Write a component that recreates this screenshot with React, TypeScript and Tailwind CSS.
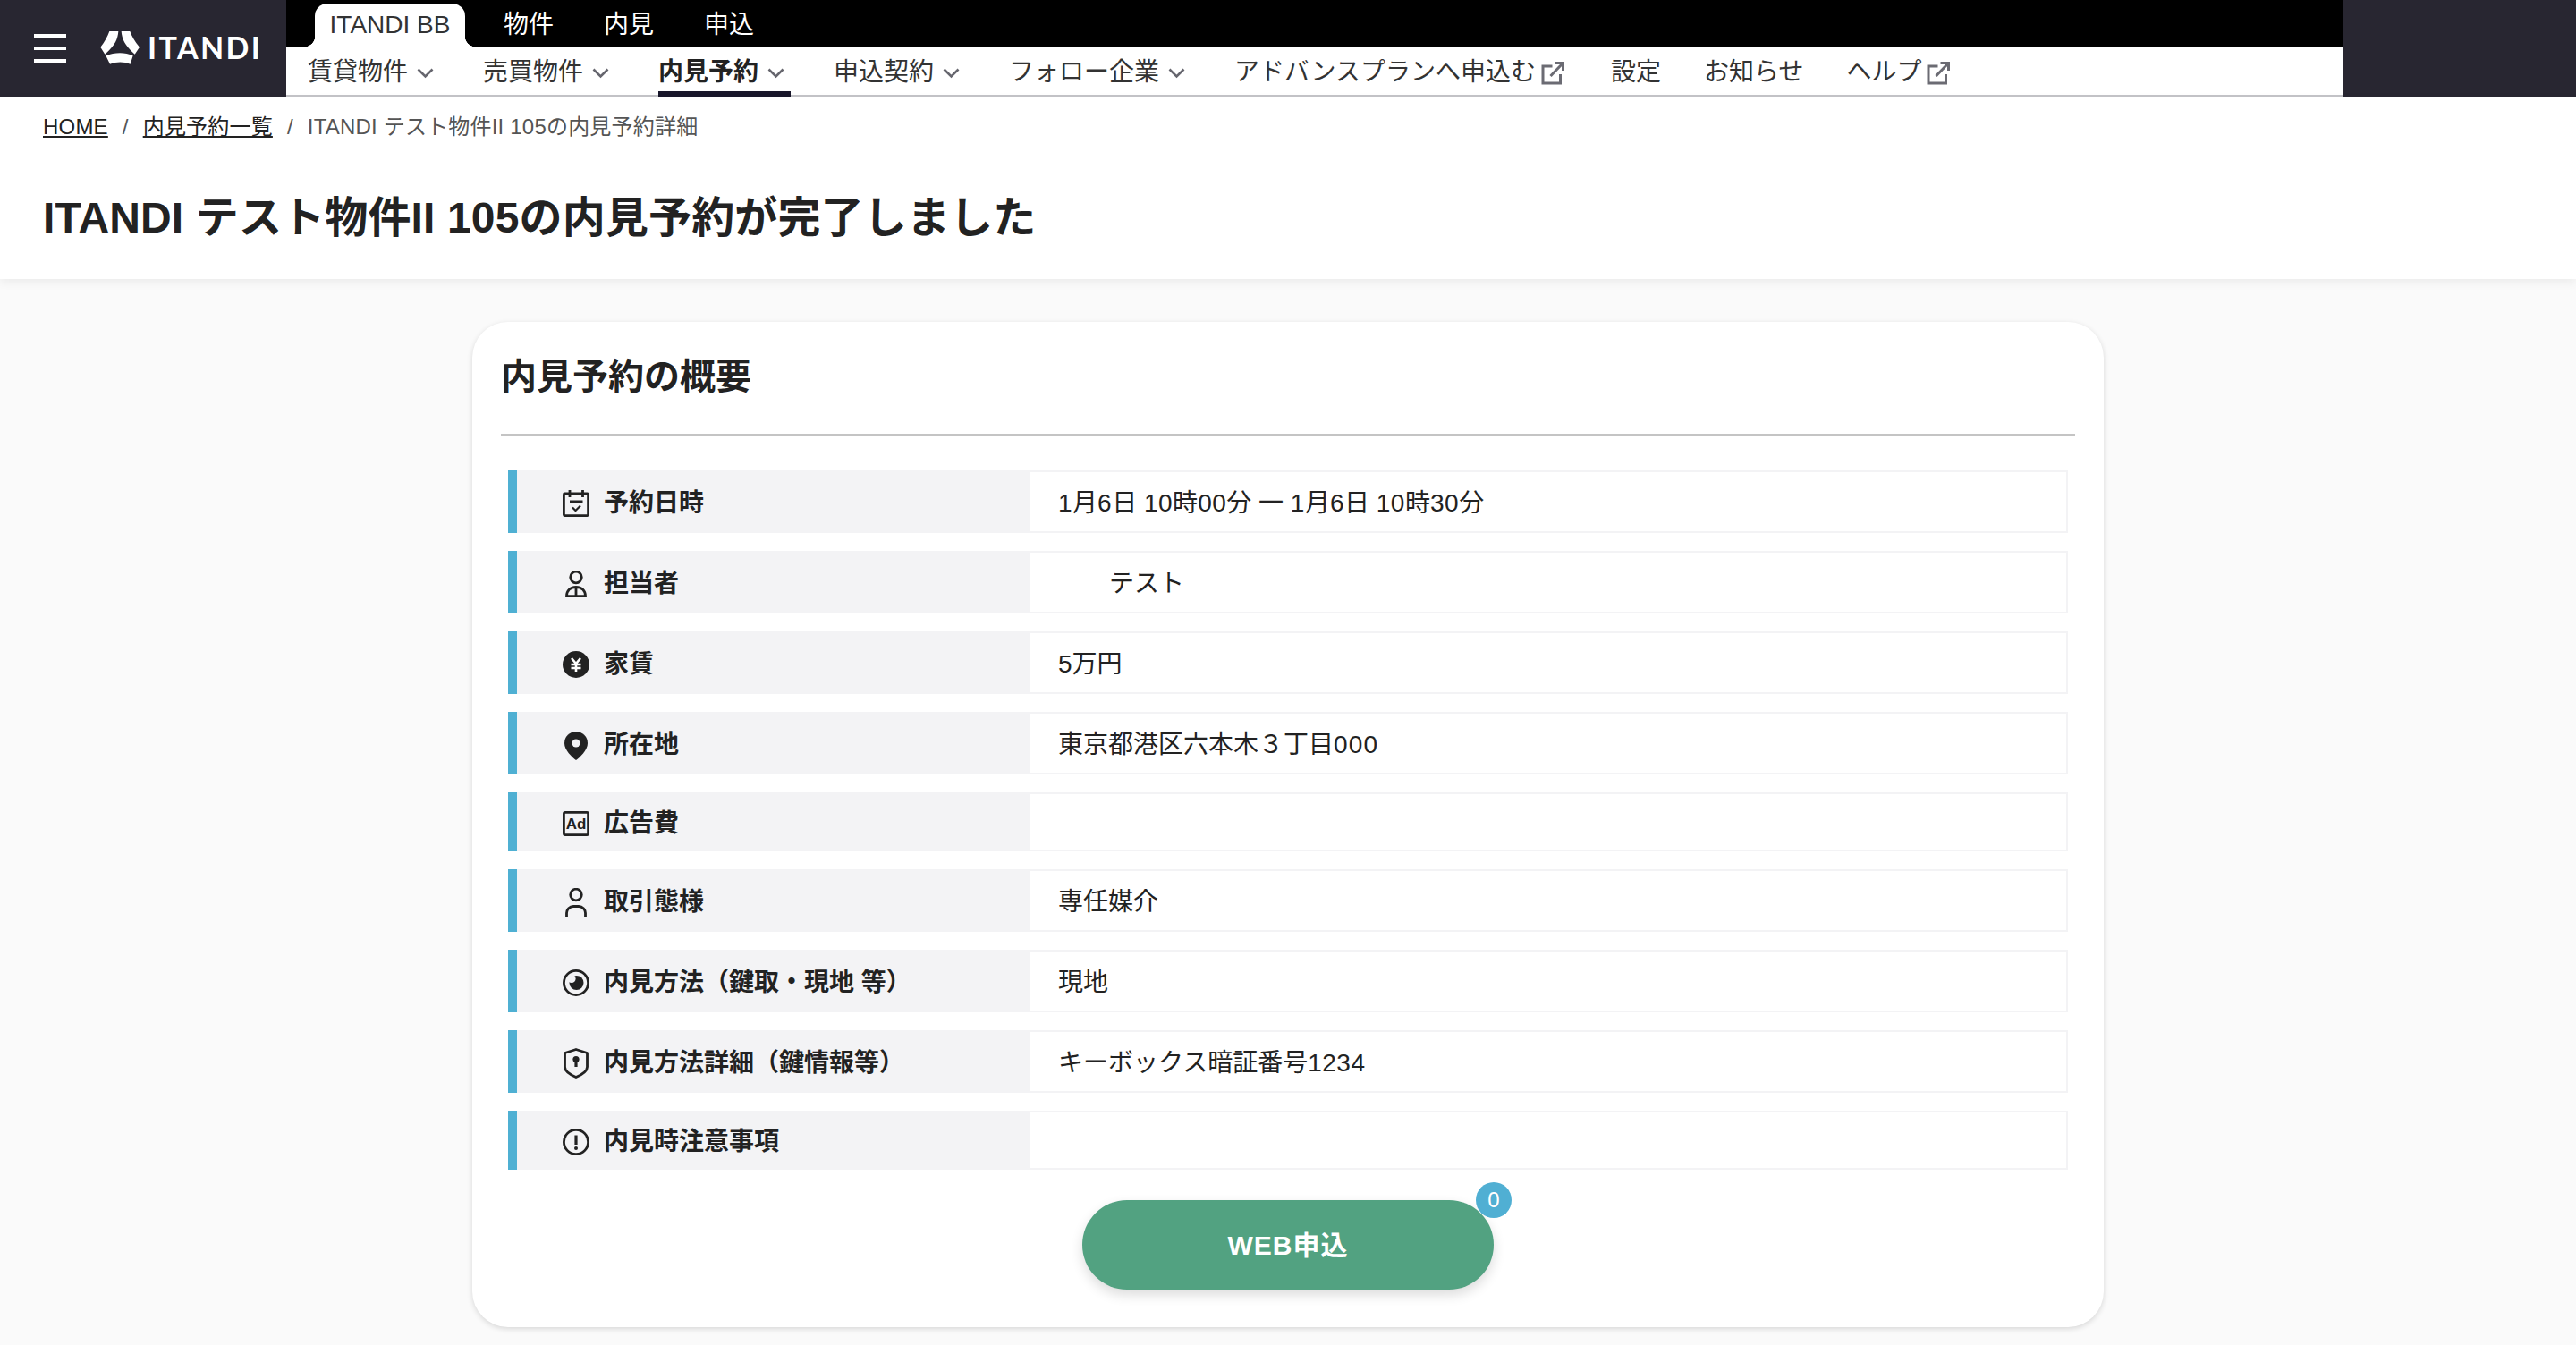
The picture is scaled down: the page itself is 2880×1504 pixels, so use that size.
import type { ReactNode } from "react";

const FONT = "font-['Liberation_Sans','Noto_Sans_CJK_JP',sans-serif]";

const Chevron = () => (
  <svg className="h-9 w-9 shrink-0" viewBox="0 0 36 36" fill="none">
    <path d="M11.5 14.5 L19.5 22.5 L27.5 14.5" stroke="#66666e" strokeWidth="2.6" />
  </svg>
);

const External = () => (
  <svg className="h-9 w-9 shrink-0" viewBox="0 0 36 36" fill="none" stroke="#6b6b73" strokeWidth="3">
    <path d="M18.5 11 H8 V30 H27.5 V20" />
    <path d="M16.5 22 L29.5 8.5" />
    <path d="M21.5 7.5 H30.5 V16" />
  </svg>
);

const CalendarIcon = () => (
  <svg className="h-[30px] w-[30px]" viewBox="0 0 30 30" fill="none" stroke="#222" strokeWidth="2.8">
    <rect x="1.4" y="4" width="27.2" height="24.6" rx="1" />
    <path d="M8 0 V8 M22.5 0 V8 M8 13 H22.5" />
    <path d="M11 19.5 L14.5 23 L20 17.5" strokeWidth="2.2" />
  </svg>
);

const StaffIcon = () => (
  <svg className="h-[30px] w-[30px]" viewBox="0 0 30 30" fill="none" stroke="#222" strokeWidth="2.8">
    <circle cx="15" cy="7.5" r="6.3" />
    <path d="M4.5 28.6 C4.5 22 9 18.5 15 18.5 C21 18.5 25.5 22 25.5 28.6 Z M15 18.5 V29" />
  </svg>
);

const YenIcon = () => (
  <svg className="h-[30px] w-[30px]" viewBox="0 0 30 30" fill="none">
    <circle cx="15" cy="15" r="15" fill="#222" />
    <path d="M10 8 L15 14 L20 8 M15 14 V23 M9.5 15 H20.5 M9.5 19 H20.5" stroke="#fff" strokeWidth="2.6" />
  </svg>
);

const PinIcon = () => (
  <svg className="mt-[2px] h-[32px] w-[30px]" viewBox="0 0 30 32" fill="none">
    <path d="M15 0 A13 13 0 0 1 28 13 C28 21 19 29 15 32 C11 29 2 21 2 13 A13 13 0 0 1 15 0 Z" fill="#222" />
    <circle cx="15" cy="13" r="4.5" fill="#f3f3f5" />
  </svg>
);

const AdIcon = () => (
  <svg className="h-[28px] w-[30px]" viewBox="0 0 30 28" fill="none">
    <rect x="1.4" y="1.4" width="27.2" height="25.2" rx="1.5" stroke="#222" strokeWidth="2.8" />
    <text x="15" y="20" textAnchor="middle" fontSize="17" fontWeight="700" fill="#222" fontFamily="Liberation Sans">
      Ad
    </text>
  </svg>
);

const PersonIcon = () => (
  <svg className="h-[32px] w-[30px]" viewBox="0 0 30 32" fill="none" stroke="#222" strokeWidth="2.8">
    <circle cx="15" cy="7.5" r="6.3" />
    <path d="M4.5 32 V28 A7.5 7.5 0 0 1 12 20.5 H18 A7.5 7.5 0 0 1 25.5 28 V32" />
  </svg>
);

const EyeIcon = () => (
  <svg className="h-[30px] w-[30px]" viewBox="0 0 30 30" fill="none">
    <circle cx="15" cy="15" r="13.6" stroke="#222" strokeWidth="2.8" />
    <circle cx="15.5" cy="15" r="8" fill="#222" />
    <circle cx="10" cy="10.5" r="4.6" fill="#f3f3f5" />
  </svg>
);

const ShieldIcon = () => (
  <svg className="h-[34px] w-[30px]" viewBox="0 0 30 34" fill="none">
    <path
      d="M15 1.5 L27.5 5.5 V21 C27.5 26 21 30 15 32.5 C9 30 2.5 26 2.5 21 V5.5 Z"
      stroke="#222"
      strokeWidth="2.8"
      strokeLinejoin="round"
    />
    <circle cx="15" cy="12.5" r="3.6" fill="#222" />
    <path d="M15 13 V21" stroke="#222" strokeWidth="3.2" />
  </svg>
);

const AlertIcon = () => (
  <svg className="h-[30px] w-[30px]" viewBox="0 0 30 30" fill="none">
    <circle cx="15" cy="15" r="13.6" stroke="#222" strokeWidth="2.8" />
    <path d="M15 7.5 V18" stroke="#222" strokeWidth="3.2" />
    <circle cx="15" cy="22" r="2" fill="#222" />
  </svg>
);

const LogoMark = () => (
  <svg className="h-[48px] w-[60px] shrink-0" viewBox="0 0 180 144" fill="#fff">
    <path d="M52 15 H82 C80 40 72 62 37 92 L22 68 C36 50 46 32 52 15 Z" />
    <path d="M92 15 H121 C127 32 138 50 153 68 L137 92 C103 62 94 40 92 15 Z" />
    <path d="M40 97 C70 85 105 85 131 97 L122 125 C100 116 76 116 54 125 Z" />
  </svg>
);

const nav: { label: string; icon?: "chevron" | "external"; active?: boolean }[] = [
  { label: "賃貸物件", icon: "chevron" },
  { label: "売買物件", icon: "chevron" },
  { label: "内見予約", icon: "chevron", active: true },
  { label: "申込契約", icon: "chevron" },
  { label: "フォロー企業", icon: "chevron" },
  { label: "アドバンスプランへ申込む", icon: "external" },
  { label: "設定" },
  { label: "お知らせ" },
  { label: "ヘルプ", icon: "external" },
];

const Header = () => (
  <header className="flex h-[108px] shrink-0">
    <div className="flex w-[320px] shrink-0 items-center bg-[#282631] pl-[38px]">
      <div className="flex w-[36px] flex-col gap-[10px]">
        <span className="h-[4px] bg-white" />
        <span className="h-[4px] bg-white" />
        <span className="h-[4px] bg-white" />
      </div>
      <div className="ml-[31px] flex items-center">
        <LogoMark />
        <span className="mb-[3px] ml-[0px] font-['Lato',sans-serif] text-[34px] leading-none font-bold tracking-[2.4px] text-white">
          ITANDI
        </span>
      </div>
    </div>
    <div className="flex min-w-0 flex-1 flex-col border-b-2 border-[#c4c4c8]">
      <div className="flex h-[52px] shrink-0 items-end bg-black pl-[32px] text-[28px]">
        <div className="relative flex h-[48px] w-[168px] items-center justify-center rounded-t-[14px] bg-white text-[#333]">
          ITANDI BB
          <span className="absolute bottom-0 left-[-12px] h-[12px] w-[12px] bg-[radial-gradient(circle_at_0_0,#000_12px,#fff_12.5px)]" />
          <span className="absolute right-[-12px] bottom-0 h-[12px] w-[12px] bg-[radial-gradient(circle_at_100%_0,#000_12px,#fff_12.5px)]" />
        </div>
        <div className="ml-[15px] flex h-[48px] items-center text-white">
          <span className="px-[28px]">物件</span>
          <span className="px-[28px]">内見</span>
          <span className="px-[28px]">申込</span>
        </div>
      </div>
      <nav className="flex h-[54px] items-start gap-[48px] bg-white pl-[24px] text-[28px] text-[#333]">
        {nav.map((item) => (
          <a
            key={item.label}
            className={`relative flex h-[56px] items-center border-b-[6px] pt-[7px] ${
              item.active ? "border-[#18162a] font-bold text-[#222]" : "border-transparent"
            }`}
          >
            {item.label}
            {item.icon === "chevron" && <Chevron />}
            {item.icon === "external" && <External />}
          </a>
        ))}
      </nav>
    </div>
    <div className="w-[260px] shrink-0 bg-[#282631]" />
  </header>
);

const Num = ({ children }: { children: ReactNode }) => <span className="tracking-[0.5px]">{children}</span>;

const rows: { icon: ReactNode; label: string; value?: ReactNode; short?: boolean }[] = [
  {
    icon: <CalendarIcon />,
    label: "予約日時",
    value: (
      <>
        <Num>1</Num>月<Num>6</Num>日 <Num>10</Num>時<Num>00</Num>分 一 <Num>1</Num>月<Num>6</Num>日 <Num>10</Num>時
        <Num>30</Num>分
      </>
    ),
  },
  { icon: <StaffIcon />, label: "担当者", value: <span className="pl-[57px]">テスト</span> },
  { icon: <YenIcon />, label: "家賃", value: "5万円" },
  {
    icon: <PinIcon />,
    label: "所在地",
    value: (
      <>
        東京都港区六本木３丁目<span className="tracking-[1.2px]">000</span>
      </>
    ),
  },
  { icon: <AdIcon />, label: "広告費", short: true },
  { icon: <PersonIcon />, label: "取引態様", value: "専任媒介" },
  { icon: <EyeIcon />, label: "内見方法（鍵取・現地 等）", value: "現地" },
  {
    icon: <ShieldIcon />,
    label: "内見方法詳細（鍵情報等）",
    value: (
      <>
        キーボックス暗証番号<Num>1234</Num>
      </>
    ),
  },
  { icon: <AlertIcon />, label: "内見時注意事項", short: true },
];

const Row = ({ icon, label, value, short }: (typeof rows)[number]) => (
  <div className={`flex border-l-[10px] border-[#4fb0d3] ${short ? "h-[66px]" : "h-[70px]"}`}>
    <div className="flex w-[572px] shrink-0 items-center gap-[16px] bg-[#f3f3f5] pt-[3px] pl-[51px] font-semibold text-[#222]">
      <span className="flex w-[30px] justify-center">{icon}</span>
      {label}
    </div>
    <div className="flex flex-1 items-center border-2 border-[#f3f3f5] pt-[3px] pl-[31px] whitespace-pre text-[#222]">
      {value}
    </div>
  </div>
);

export default function App() {
  return (
    <div className={`flex h-[1504px] flex-col overflow-hidden bg-[#fafafa] ${FONT}`}>
      <Header />
      <section className="h-[204px] shrink-0 bg-white pt-[18px] pl-[48px] shadow-[0_4px_10px_rgba(0,0,0,0.06)]">
        <div className="flex text-[24px] leading-[32px] tracking-[0.2px] text-[#555]">
          <a className="text-[#222] underline">HOME</a>
          <span className="mx-[16px]">/</span>
          <a className="text-[#222] underline">内見予約一覧</a>
          <span className="mx-[16px]">/</span>
          <span>ITANDI テスト物件II 105の内見予約詳細</span>
        </div>
        <h1 className="mt-[56px] text-[48px] leading-[60px] font-bold tracking-[0.15px] text-[#222]">
          ITANDI テスト物件II 105の内見予約が完了しました
        </h1>
      </section>
      <main className="flex justify-center pt-[48px]">
        <div className="w-[1824px] rounded-[40px] bg-white px-[32px] pt-[33px] pb-[42px] text-[28px] shadow-[0_2px_6px_rgba(0,0,0,0.14)]">
          <h2 className="text-[40px] leading-[56px] font-bold text-[#222]">内見予約の概要</h2>
          <div className="mt-[36px] h-[2px] bg-[#c4c4c4]" />
          <div className="mx-[8px] mt-[39px] flex flex-col gap-[20px]">
            {rows.map((row) => (
              <Row key={row.label} {...row} />
            ))}
          </div>
          <div className="mt-[34px] flex justify-center">
            <button className="relative h-[100px] w-[460px] rounded-full bg-[#52a281] text-[30px] font-bold tracking-[1px] text-white shadow-[0_6px_14px_rgba(0,0,0,0.14)]">
              WEB申込
              <span className="absolute top-[-20px] right-[-20px] flex h-[40px] w-[40px] items-center justify-center rounded-full bg-[#50afd3] text-[24px] font-normal tracking-normal">
                0
              </span>
            </button>
          </div>
        </div>
      </main>
    </div>
  );
}
